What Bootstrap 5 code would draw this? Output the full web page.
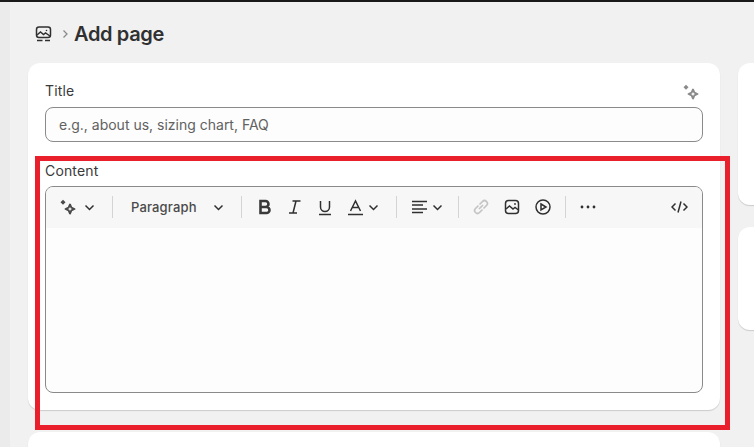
<!DOCTYPE html>
<html lang="en"><head><meta charset="utf-8">
<link href="https://cdn.jsdelivr.net/npm/bootstrap@5.3.0/dist/css/bootstrap.min.css" rel="stylesheet">
<style>
html,body{height:447px;overflow:hidden;background:#f1f1f1;}
body{font-family:Inter,"Liberation Sans",sans-serif;color:#3a3a3a;font-size:14px;letter-spacing:.15px;}
.topstrip{height:2px;background:#1a1a1a;}
.shell{height:445px;overflow:hidden;}
.leftstrip{width:10px;background:#ebebeb;flex:none;}
.mainarea{padding:0 0 0 18px;flex:1;min-width:0;}
.crumbs{height:61px;padding-left:7px;padding-top:3px;gap:10px;}
.crumbs h1{font-size:20px;font-weight:600;margin:0 0 0 -5px;letter-spacing:-.35px;color:#303030;}
.layoutcols{gap:18px;width:760px;}
.primarycol{width:692px;flex:none;}
.sidecol{flex:1;gap:22px;}
.whitecard{background:#fff;border-radius:12px;border:0;box-shadow:0 1px 1px rgba(0,0,0,.16);}
.sidecard1{height:142px;}
.sidecard2{height:103px;}
.editcard{height:347px;padding:17px;margin-bottom:22px;}
.lbl{line-height:20px;height:20px;margin-bottom:7px;}
.titlerow{padding-top:1px;height:21px;margin-bottom:6px;}
.spark{color:#8a8a8a;margin-right:3px;margin-top:3px;}
.titlefield{height:35px;border:1px solid #8a8a8a;border-radius:8px;background:#fdfdfd;padding:0 13px;font-size:14px;color:#616161;box-shadow:none;}
.titlefield::placeholder{color:#616161;opacity:1;}
.titlefield:focus{border-color:#8a8a8a;box-shadow:none;}
.contentlbl{margin-top:19px;margin-bottom:5px;}
.editorbox{height:208px;border:1px solid #8a8a8a;border-radius:8px;overflow:hidden;background:#fdfdfd;}
.edtoolbar{height:41px;background:#f7f7f7;padding:0 14px 0 14px;}
.vsep{width:1px;height:22px;background:#d4d4d4;flex:none;}
.tbglyph{display:block;flex:none;color:#4a4a4a;}
.paralabel{font-size:13px;font-weight:500;color:#4a4a4a;}
.redframe{position:absolute;left:35px;top:156px;width:695px;height:274px;border:5px solid #e91f2b;pointer-events:none;}
.m4{margin-left:4px}.m5{margin-left:5px}.m7{margin-left:7px}.m14{margin-left:14px}.m15{margin-left:15px}.m16{margin-left:16px}.m17{margin-left:17px}.m18{margin-left:18px}
</style></head><body>
<div class="topstrip"></div>
<div class="d-flex shell">
 <div class="leftstrip"></div>
 <div class="mainarea">
  <div class="crumbs d-flex align-items-center">
   <svg width="17" height="17" viewBox="0 0 17 17" fill="none" stroke="#303030" stroke-width="1.5"><rect x="1.5" y="1" width="14" height="10.5" rx="2.5"/><path d="M2 9l3.500-3 3 2.500 2-1.500 4.500 3"/><circle cx="11.500" cy="4.500" r=".8" fill="#303030" stroke="none"/><path d="M2 14.500h5.500M10 14.500h5"/></svg>
   <svg width="7" height="10" viewBox="0 0 7 10" fill="none" stroke="#8a8a8a" stroke-width="1.3"><path d="M1.500 1.500l3.500 3.500-3.500 3.500"/></svg>
   <h1>Add page</h1>
  </div>
  <div class="layoutcols d-flex">
   <div class="primarycol">
    <div class="card whitecard editcard">
     <div class="d-flex justify-content-between lbl titlerow"><span>Title</span>
      <svg class="spark" width="17" height="17" viewBox="0 0 17 17" fill="none" stroke="currentColor"><path d="M3 .8l2.500 2.500-2.500 2.500-2.500-2.500z" fill="currentColor" stroke="none"/><path d="M10 5.500l1.400 3.100 3.100 1.400-3.100 1.400L10 14.500l-1.400-3.100L5.500 10l3.100-1.400z" stroke-width="1.900" stroke-linejoin="round"/></svg>
     </div>
     <input class="form-control titlefield" type="text" placeholder="e.g., about us, sizing chart, FAQ">
     <div class="lbl contentlbl">Content</div>
     <div class="editorbox">
      <div class="edtoolbar d-flex align-items-center">
       <svg class="tbglyph" width="17" height="17" viewBox="0 0 17 17" fill="none" stroke="#4a4a4a"><path d="M3 .8l2.500 2.500-2.500 2.500-2.500-2.500z" fill="#4a4a4a" stroke="none"/><path d="M10 5.500l1.400 3.100 3.100 1.400-3.100 1.400L10 14.500l-1.400-3.100L5.500 10l3.100-1.400z" stroke-width="1.900" stroke-linejoin="round"/></svg>
       <svg class="tbglyph m7" width="11" height="7" viewBox="0 0 11 7" fill="none" stroke="#303030" stroke-width="1.500"><path d="M1.500 1.500l4 4 4-4"/></svg>
       <div class="vsep m17"></div>
       <span class="paralabel m18">Paragraph</span>
       <svg class="tbglyph m16" width="11" height="7" viewBox="0 0 11 7" fill="none" stroke="#303030" stroke-width="1.500"><path d="M1.500 1.500l4 4 4-4"/></svg>
       <div class="vsep m17"></div>
       <svg class="tbglyph m16" width="14" height="16" viewBox="0 0 14 16" fill="none" stroke="#3a3a3a" stroke-width="2.600"><path d="M2.500 2h5a3 3 0 0 1 0 6h-5zM2.500 8h6a3 3 0 0 1 0 6h-6z"/></svg>
       <svg class="tbglyph m16" width="13" height="16" viewBox="0 0 13 16" fill="none" stroke="#303030" stroke-width="1.500"><path d="M4.500 2h8M1 14h8M8 2L5 14"/></svg>
       <svg class="tbglyph m17" width="14" height="17" viewBox="0 0 14 17" fill="none" stroke="#303030" stroke-width="1.500"><path d="M2.500 2v6a4.500 4.500 0 0 0 9 0V2M1 15.500h12"/></svg>
       <svg class="tbglyph m16" width="15" height="17" viewBox="0 0 15 17" fill="none" stroke="#303030" stroke-width="1.500"><path d="M2.500 12L7.500 2l5 10M4.500 8.500h6M0 15.500h15"/></svg>
       <svg class="tbglyph m5" width="11" height="7" viewBox="0 0 11 7" fill="none" stroke="#303030" stroke-width="1.500"><path d="M1.500 1.500l4 4 4-4"/></svg>
       <div class="vsep m17"></div>
       <svg class="tbglyph m15" width="16" height="14" viewBox="0 0 16 14" fill="none" stroke="#303030" stroke-width="1.500"><path d="M0 1.500h15M0 5h11M0 9h15M0 12.500h11"/></svg>
       <svg class="tbglyph m4" width="11" height="7" viewBox="0 0 11 7" fill="none" stroke="#303030" stroke-width="1.500"><path d="M1.500 1.500l4 4 4-4"/></svg>
       <div class="vsep m15"></div>
       <svg class="tbglyph m14" width="16" height="16" viewBox="0 0 16 16" fill="none" stroke="#c4c4c4" stroke-width="1.700"><path d="M6.500 5.500l3-3a2.800 2.800 0 0 1 4 4l-3 3M9.500 10.500l-3 3a2.800 2.800 0 0 1-4-4l3-3M6 10l4-4"/></svg>
       <svg class="tbglyph m15" width="16" height="16" viewBox="0 0 16 16" fill="none" stroke="#303030" stroke-width="1.500"><rect x="1.500" y="1.500" width="13" height="13" rx="3"/><path d="M2 10l3.500-3 3.500 3 2-1.500 3.500 2.500"/><circle cx="11" cy="5" r=".9" fill="#303030" stroke="none"/></svg>
       <svg class="tbglyph m15" width="16" height="16" viewBox="0 0 16 16" fill="none" stroke="#303030" stroke-width="1.500"><circle cx="8" cy="8" r="7"/><path d="M6 5l5 3-5 3z"/></svg>
       <div class="vsep m14"></div>
       <svg class="tbglyph m14" width="16" height="4" viewBox="0 0 16 4" fill="#303030"><circle cx="2" cy="2" r="1.400"/><circle cx="8" cy="2" r="1.400"/><circle cx="14" cy="2" r="1.400"/></svg>
       <svg class="tbglyph ms-auto" width="17" height="14" viewBox="0 0 17 14" fill="none" stroke="#303030" stroke-width="1.500"><path d="M4.500 3.500L1 7l3.500 3.500M12.500 3.500L16 7l-3.500 3.500M10 1.500L7 12.500"/></svg>
      </div>
     </div>
    </div>
    <div class="card whitecard"><div class="p-5"></div></div>
   </div>
   <div class="sidecol d-flex flex-column">
    <div class="card whitecard sidecard1"></div>
    <div class="card whitecard sidecard2"></div>
   </div>
  </div>
 </div>
</div>
<div class="redframe"></div>
</body></html>
